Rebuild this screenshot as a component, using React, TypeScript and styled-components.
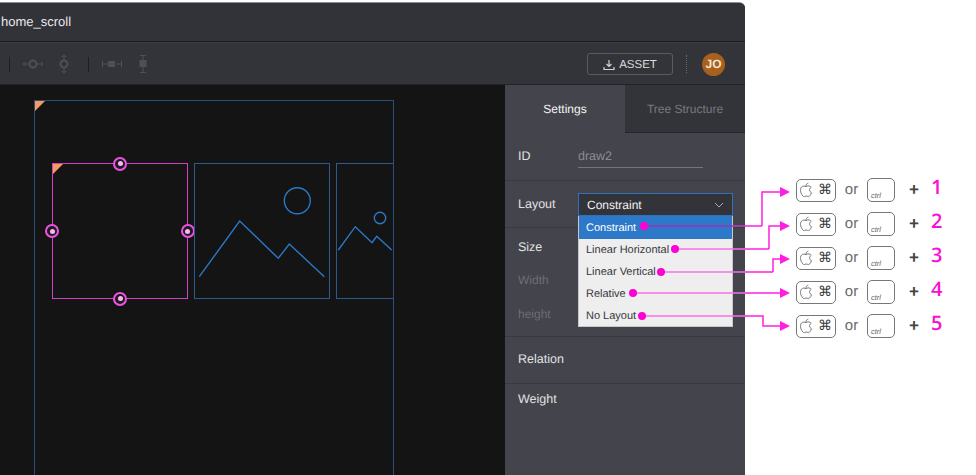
import React from "react";
import styled, { createGlobalStyle } from "styled-components";

const Global = createGlobalStyle`
  html, body { margin: 0; padding: 0; background: #fff; overflow: hidden; }
  body { font-family: "Liberation Sans", Arial, sans-serif; text-rendering: geometricPrecision; }
`;
const Page = styled.div`
  position: relative; width: 976px; height: 475px; display: flex; overflow: hidden; background: #fff;
`;
const Win = styled.div`
  width: 745px; height: 473px; margin-top: 2px; display: flex; flex-direction: column; flex: none;
  background: #333439; border-top: 1px solid #87909b; border-top-right-radius: 6px; overflow: hidden;
  box-sizing: border-box;
`;
const TitleBar = styled.div`
  height: 39px; flex: none; display: flex; align-items: center; padding-left: 1px; box-sizing: border-box;
  font-size: 13px; color: #e8e8ea; background: #323338; border-bottom: 1px solid #1d1d20; padding-bottom: 2px;
`;
const Toolbar = styled.div`
  height: 43px; flex: none; display: flex; align-items: center; box-sizing: border-box; background: #333439;
  border-top: 1px solid #3a3b40; border-bottom: 1px solid #232327; padding: 1px 0 0 9px;
`;
const ToolSep = styled.span<{ $left?: number }>`
  width: 1px; height: 15px; background: #1f1f22; margin-left: ${p => p.$left ?? 0}px; flex: none;
`;
const ToolIcon = styled.svg<{ $left: number }>`
  margin-left: ${p => p.$left}px; flex: none; display: block; color: #4f5056;
`;
const ToolRight = styled.div`
  margin-left: auto; display: flex; align-items: center; padding-right: 20px;
`;
const AssetBtn = styled.div`
  width: 86px; height: 22px; box-sizing: border-box; border: 1px solid #5b5c62; border-radius: 3px; padding-top: 1px;
  display: flex; align-items: center; justify-content: center; gap: 4px; font-size: 11.5px; color: #dcdcde;
`;
const DotSep = styled.span`
  width: 0; height: 18px; border-left: 1px dotted #6a6b70; margin: 0 15px 0 13px;
`;
const Avatar = styled.div`
  width: 23px; height: 23px; border-radius: 50%; background: #a8611c; color: #f4e6d6; font-size: 12px; font-weight: 700;
  display: flex; align-items: center; justify-content: center;
`;
const Main = styled.div`flex: 1; display: flex; min-height: 0;`;
const Canvas = styled.div`
  width: 505px; flex: none; background: #141415; padding: 15px 0 0 34px; box-sizing: border-box; overflow: hidden;
`;
const Artboard = styled.div`
  position: relative; width: 360px; height: 500px; box-sizing: border-box; border: 1px solid #27507f;
  padding: 62px 0 0 17px; display: flex; gap: 6px; align-items: flex-start; overflow: hidden;
`;
const Corner = styled.span`
  position: absolute; left: 0; top: 0; width: 10px; height: 10px; background: #f79a62;
  clip-path: polygon(0 0, 100% 0, 0 100%);
`;
const Frame = styled.div<{ $selected?: boolean }>`
  position: relative; flex: none; width: 136px; height: 136px; box-sizing: border-box;
  border: 1px solid ${p => (p.$selected ? "#d13fc4" : "#2b5a8f")};
`;
const Art = styled.svg`
  display: block; fill: none; stroke: #2a78c6; stroke-width: 1.4px;
`;
const Handle = styled.span<{ $x: string; $y: string }>`
  position: absolute; left: ${p => p.$x}; top: ${p => p.$y}; width: 14px; height: 14px; margin: -7px 0 0 -7px;
  box-sizing: border-box; border-radius: 50%; border: 2px solid #ee52e1; background: #1e1c22;
  display: flex; align-items: center; justify-content: center;
  &::after { content: ""; width: 5px; height: 5px; border-radius: 50%; background: #f6b8ef; }
`;
const Panel = styled.div`
  flex: 1; background: #43444c; display: flex; flex-direction: column; color: #dcdcde; font-size: 13px;
`;
const Tabs = styled.div`display: flex; height: 48px; flex: none;`;
const Tab = styled.div<{ $active?: boolean }>`
  width: 120px; display: flex; align-items: center; justify-content: center; font-size: 12px; box-sizing: border-box;
  color: ${p => (p.$active ? "#f4f4f5" : "#77787e")};
  background: ${p => (p.$active ? "#43444c" : "#333439")};
  border-bottom: 1px solid ${p => (p.$active ? "#43444c" : "#25262a")};
`;
const Section = styled.div<{ $h: number }>`
  height: ${p => p.$h}px; flex: none; box-sizing: border-box; border-bottom: 1px solid #38393f; padding-left: 13px;
  display: flex; align-items: center;
`;
const Label = styled.div`width: 60px; flex: none; font-size: 12.5px; color: #e2e2e4;`;
const IdField = styled.div`
  width: 125px; height: 24px; box-sizing: border-box; border-bottom: 1px solid #75767b; color: #8c8d92; font-size: 12.5px;
  display: flex; align-items: center; margin-top: -1px;
`;
const IdLabel = styled(Label)`margin-top: -2px;`;
const SelectWrap = styled.div`position: relative; width: 155px; margin-top: 1px;`;
const SelectBox = styled.div`
  height: 23px; box-sizing: border-box; border: 1px solid #2d72bb; background: #333439; color: #f0f0f1; font-size: 12px;
  display: flex; align-items: center; justify-content: space-between; padding: 0 8px;
`;
const Menu = styled.div`
  position: absolute; left: 0; top: 23px; width: 100%; background: #eeeeee; z-index: 3;
  border: 1px solid #c8c8cc; border-top: 0; box-sizing: border-box; height: 111px; overflow: hidden;
`;
const MenuItem = styled.div<{ $active?: boolean }>`
  height: ${p => (p.$active ? 23 : 22)}px; display: flex; align-items: center; padding-left: 7px;
  box-sizing: border-box; font-size: 11px;
  color: ${p => (p.$active ? "#fff" : "#38383c")}; background: ${p => (p.$active ? "#2e78c9" : "transparent")};
`;
const SizeSection = styled(Section)`
  flex-direction: column; align-items: flex-start; padding-top: 12px;
`;
const SizeRow = styled.div<{ $top: number }>`
  margin-top: ${p => p.$top}px; font-size: 12px; color: #6d6e74;
`;
const TextSection = styled(Section)<{ $top: number }>`
  align-items: flex-start; padding-top: ${p => p.$top}px;
`;
const LastSection = styled.div`
  flex: 1; padding: 8px 0 0 13px; box-sizing: border-box;
`;
const Legend = styled.div`
  padding: 173px 0 0 51px; display: flex; flex-direction: column;
`;
const LegendRow = styled.div`
  height: 34px; display: flex; align-items: center;
`;
const CmdKey = styled.div`
  width: 40px; height: 23px; box-sizing: border-box; border: 1.5px solid #777; border-radius: 5px;
  display: flex; align-items: center; justify-content: space-between; padding: 0 3px 0 2px; color: #3a3a3a;
`;
const Cmd = styled.span`font-family: "DejaVu Sans", sans-serif; font-size: 14px; line-height: 1;`;
const Or = styled.span`width: 31px; text-align: center; font-size: 15px; color: #6a6a6a; margin-top: -1px;`;
const CtrlKey = styled.div`
  width: 28px; height: 24px; box-sizing: border-box; border: 1.5px solid #777; border-radius: 5px;
  font-size: 7.5px; font-style: italic; color: #666; display: flex; align-items: flex-end; padding: 0 0 2px 3px; line-height: 1;
`;
const Plus = styled.span`
  width: 38px; text-align: center; font-size: 17px; font-weight: 700; color: #444;
`;
const Digit = styled.span`
  font-family: "Open Sans", sans-serif; font-size: 20px; line-height: 1; color: #fb0fd3; font-weight: 600; margin: -6px 0 0 -2px;
`;
const Overlay = styled.svg`
  position: absolute; left: 0; top: 0; z-index: 5; pointer-events: none;
`;

const Apple = () => (
  <svg width="14" height="16" viewBox="0 0 14 16" fill="none" stroke="#777" strokeWidth="1">
    <path d="M7 4.600c1-.6 2-.9 3-.7 1 .2 1.700.7 2.200 1.400-1.200.8-1.700 1.700-1.600 2.900.1 1.200.8 2 1.900 2.500-.4 1.200-1 2.300-1.800 3.200-.7.800-1.500.8-2.300.4-.8-.4-1.600-.4-2.400 0-.8.400-1.500.4-2.200-.4C2.500 12.300 1.600 10.300 1.500 8.500 1.400 6.800 2 5.300 3.300 4.500c1-.6 2.400-.5 3.700.1Z" />
    <path d="M7 4.300c0-1.500.7-2.700 2.300-3.300" />
  </svg>
);

const Rows = [1, 2, 3, 4, 5];
const P = "#ff1fe0";
const paths = [
  "M762 226V192H781",
  "M769 249V226H781",
  "M773 272V259H781",
  "M745 293H781",
  "M745 316H763V326H781",
];
const tips = [192, 226, 259, 293, 326];
const dots: [number, number][] = [[644, 226], [675, 249], [661, 272], [633, 293], [642, 316]];

export default function App() {
  return (
    <Page>
      <Global />
      <Win>
        <TitleBar>home_scroll</TitleBar>
        <Toolbar>
          <ToolSep />
          <ToolIcon $left={12} width="22" height="12" viewBox="0 0 22 12" fill="none" stroke="currentColor">
            <circle cx="11" cy="6" r="3.500" strokeWidth="2" />
            <path d="M1 6h6M15 6h6M3 4 1 6l2 2M19 4l2 2-2 2" />
          </ToolIcon>
          <ToolIcon $left={14} width="12" height="20" viewBox="0 0 12 20" fill="none" stroke="currentColor">
            <circle cx="6" cy="10" r="3.500" strokeWidth="2" />
            <path d="M6 1v5M6 14v5M4 3l2-2 2 2M4 17l2 2 2-2" />
          </ToolIcon>
          <ToolSep $left={18} />
          <ToolIcon $left={13} width="20" height="12" viewBox="0 0 20 12" fill="none" stroke="currentColor">
            <path d="M.5 3v6M.5 6h5M14 6h5.500M19.500 3v6" />
            <rect x="6" y="3" width="7" height="6" fill="currentColor" stroke="none" />
          </ToolIcon>
          <ToolIcon $left={15} width="12" height="18" viewBox="0 0 12 18" fill="none" stroke="currentColor">
            <path d="M3 .5h6M6 .5v5M6 12v5M3 17.500h6" />
            <rect x="2.500" y="5" width="7" height="7" fill="currentColor" stroke="none" />
          </ToolIcon>
          <ToolRight>
            <AssetBtn>
              <svg width="12" height="12" viewBox="0 0 12 12" fill="none" stroke="#d4d4d6" strokeWidth="1.200">
                <path d="M6 1v6.500M3.500 5 6 7.500 8.500 5M1 8v2.500h10V8" />
              </svg>
              ASSET
            </AssetBtn>
            <DotSep />
            <Avatar>JO</Avatar>
          </ToolRight>
        </Toolbar>
        <Main>
          <Canvas>
            <Artboard>
              <Corner />
              <Frame $selected>
                <Corner />
                <Handle $x="50%" $y="-0.5px" />
                <Handle $x="-1px" $y="50%" />
                <Handle $x="calc(100% + 0.5px)" $y="50%" />
                <Handle $x="50%" $y="calc(100% + 0.5px)" />
              </Frame>
              <Frame>
                <Art width="134" height="134" viewBox="0 0 134 134">
                  <path d="M4.300 112.700 44.700 57 83.300 94.300 94.300 80 129.300 112.700" />
                  <circle cx="102.300" cy="36.700" r="13" />
                </Art>
              </Frame>
              <Frame>
                <Art width="134" height="134" viewBox="0 0 134 134">
                  <path d="M1.300 86 18.300 62.700 35 78.700 39.700 72.300 54.700 86" />
                  <circle cx="43" cy="54" r="5.700" />
                </Art>
              </Frame>
            </Artboard>
          </Canvas>
          <Panel>
            <Tabs>
              <Tab $active>Settings</Tab>
              <Tab>Tree Structure</Tab>
            </Tabs>
            <Section $h={48}>
              <IdLabel>ID</IdLabel>
              <IdField>draw2</IdField>
            </Section>
            <Section $h={47}>
              <Label>Layout</Label>
              <SelectWrap>
                <SelectBox>
                  Constraint
                  <svg width="10" height="6" viewBox="0 0 10 6" fill="none" stroke="#a9a9ad" strokeWidth="1">
                    <path d="M1 1l4 4 4-4" />
                  </svg>
                </SelectBox>
                <Menu>
                  <MenuItem $active>Constraint</MenuItem>
                  <MenuItem>Linear Horizontal</MenuItem>
                  <MenuItem>Linear Vertical</MenuItem>
                  <MenuItem>Relative</MenuItem>
                  <MenuItem>No Layout</MenuItem>
                </Menu>
              </SelectWrap>
            </Section>
            <SizeSection $h={109}>
              <Label>Size</Label>
              <SizeRow $top={19}>Width</SizeRow>
              <SizeRow $top={20}>height</SizeRow>
            </SizeSection>
            <TextSection $h={47} $top={15}>
              <Label>Relation</Label>
            </TextSection>
            <LastSection>
              <Label>Weight</Label>
            </LastSection>
          </Panel>
        </Main>
      </Win>
      <Legend>
        {Rows.map(n => (
          <LegendRow key={n}>
            <CmdKey>
              <Apple />
              <Cmd>⌘</Cmd>
            </CmdKey>
            <Or>or</Or>
            <CtrlKey>ctrl</CtrlKey>
            <Plus>+</Plus>
            <Digit>{n}</Digit>
          </LegendRow>
        ))}
      </Legend>
      <Overlay width="976" height="475" viewBox="0 0 976 475" fill="none">
        <path d="M644 226H733" stroke="#a32fb4" strokeWidth="1.500" />
        <path d="M733 226H745" stroke="#c13ccb" strokeWidth="1.500" />
        <path d="M675 249H745" stroke="#f86fe6" strokeWidth="1.500" />
        <path d="M661 272H745" stroke="#f86fe6" strokeWidth="1.500" />
        <path d="M633 293H745" stroke="#f86fe6" strokeWidth="1.500" />
        <path d="M642 316H745" stroke="#f86fe6" strokeWidth="1.500" />
        <path d="M745 226H762M745 249H769M745 272H773" stroke={P} strokeWidth="1.500" />
        {paths.map(d => <path key={d} d={d} stroke={P} strokeWidth="1.500" />)}
        {tips.map(y => <path key={y} d={`M780 ${y - 5}L790 ${y}L780 ${y + 5}Z`} fill={P} />)}
        {dots.map(([x, y]) => <circle key={x} cx={x} cy={y} r="4" fill="#ff00d4" />)}
      </Overlay>
    </Page>
  );
}
